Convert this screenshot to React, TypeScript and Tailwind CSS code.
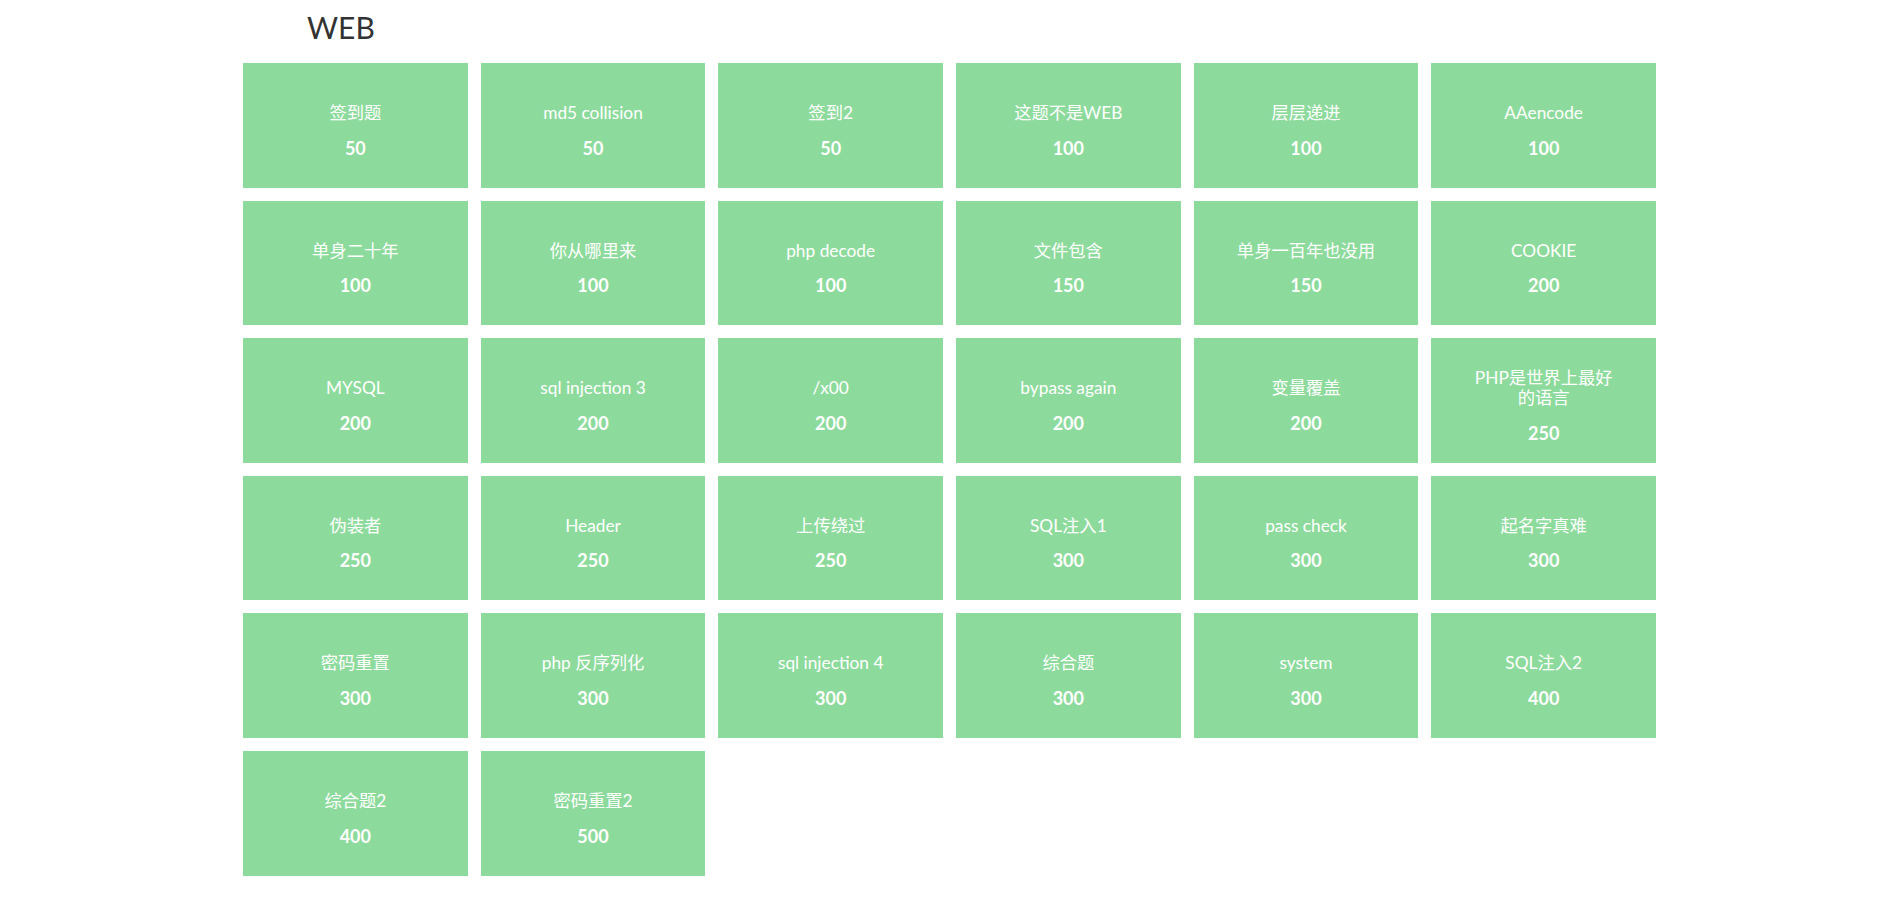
const challenges = [
  { title: '签到题', score: 50 },
  { title: 'md5 collision', score: 50 },
  { title: '签到2', score: 50 },
  { title: '这题不是WEB', score: 100 },
  { title: '层层递进', score: 100 },
  { title: 'AAencode', score: 100 },
  { title: '单身二十年', score: 100 },
  { title: '你从哪里来', score: 100 },
  { title: 'php decode', score: 100 },
  { title: '文件包含', score: 150 },
  { title: '单身一百年也没用', score: 150 },
  { title: 'COOKIE', score: 200 },
  { title: 'MYSQL', score: 200 },
  { title: 'sql injection 3', score: 200 },
  { title: '/x00', score: 200 },
  { title: 'bypass again', score: 200 },
  { title: '变量覆盖', score: 200 },
  { title: 'PHP是世界上最好的语言', score: 250 },
  { title: '伪装者', score: 250 },
  { title: 'Header', score: 250 },
  { title: '上传绕过', score: 250 },
  { title: 'SQL注入1', score: 300 },
  { title: 'pass check', score: 300 },
  { title: '起名字真难', score: 300 },
  { title: '密码重置', score: 300 },
  { title: 'php 反序列化', score: 300 },
  { title: 'sql injection 4', score: 300 },
  { title: '综合题', score: 300 },
  { title: 'system', score: 300 },
  { title: 'SQL注入2', score: 400 },
  { title: '综合题2', score: 400 },
  { title: '密码重置2', score: 500 },
];

export default function App() {
  return (
    <div className="min-h-screen bg-white pr-[2px] font-['Lato','Noto_Sans_CJK_SC',sans-serif]">
      <div className="mx-auto w-[1413px] pt-[11px]">
        <h1 className="pl-[64px] text-[30px] leading-[33px] text-[#333] font-normal">WEB</h1>

        {/* challenge tiles */}
        <div className="mt-[19px] grid grid-cols-6 gap-x-[13px] gap-y-[13px]">
          {challenges.map((c) => (
            <div
              key={c.title}
              className="h-[124.6px] bg-[#8ddb9c] flex flex-col items-center justify-center pt-[10px] px-[37px] text-white text-center cursor-pointer"
            >
              <div className="text-[17.3px] leading-[20px]">{c.title}</div>
              <div className="mt-[14.7px] text-[18px] leading-[20px] font-bold">{c.score}</div>
            </div>
          ))}
        </div>
      </div>
    </div>
  );
}
